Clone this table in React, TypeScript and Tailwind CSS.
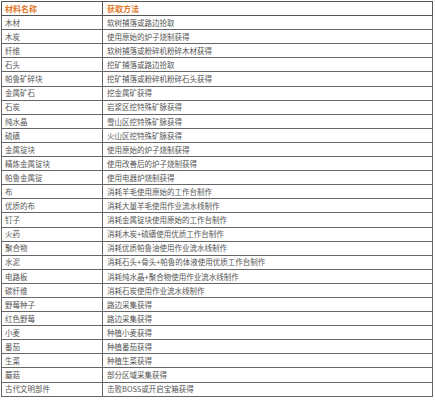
const rows: [string, string][] = [
  ["木材", "软树捕落或路边拾取"],
  ["木炭", "使用原始的炉子烧制获得"],
  ["纤维", "软树捕落或粉碎机粉碎木材获得"],
  ["石头", "挖矿捕落或路边拾取"],
  ["帕鲁矿碎块", "挖矿捕落或粉碎机粉碎石头获得"],
  ["金属矿石", "挖金属矿获得"],
  ["石炭", "岩浆区挖特殊矿脉获得"],
  ["纯水晶", "雪山区挖特殊矿脉获得"],
  ["硫磺", "火山区挖特殊矿脉获得"],
  ["金属锭块", "使用原始的炉子烧制获得"],
  ["精炼金属锭块", "使用改善后的炉子烧制获得"],
  ["帕鲁金属锭", "使用电器炉烧制获得"],
  ["布", "消耗羊毛使用原始的工作台制作"],
  ["优质的布", "消耗大量羊毛使用作业流水线制作"],
  ["钉子", "消耗金属锭块使用原始的工作台制作"],
  ["火药", "消耗木炭+硫磺使用优质工作台制作"],
  ["聚合物", "消耗优质帕鲁油使用作业流水线制作"],
  ["水泥", "消耗石头+骨头+帕鲁的体液使用优质工作台制作"],
  ["电路板", "消耗纯水晶+聚合物使用作业流水线制作"],
  ["碳纤维", "消耗石炭使用作业流水线制作"],
  ["野莓种子", "路边采集获得"],
  ["红色野莓", "路边采集获得"],
  ["小麦", "种植小麦获得"],
  ["番茄", "种植番茄获得"],
  ["生菜", "种植生菜获得"],
  ["蘑菇", "部分区域采集获得"],
  ["古代文明部件", "击败BOSS或开启宝箱获得"],
];

export default function App() {
  return (
    <div className="w-[435px] h-[400px] bg-white pt-[1px] pl-[1px]" style={{ fontFamily: '"Noto Sans CJK SC", "Noto Sans", sans-serif' }}>
      <table className="w-[432px] border-collapse border border-[#555] text-[7.5px] leading-none text-[#555]">
        <colgroup>
          <col className="w-[101px]" />
          <col />
        </colgroup>
        <thead>
          <tr className="h-[14.1px]">
            <th className="border border-[#555] pl-[3px] text-left font-bold text-[8px] text-[#e0782a]">材料名称</th>
            <th className="border border-[#555] pl-[4px] text-left font-bold text-[8px] text-[#e0782a]">获取方法</th>
          </tr>
        </thead>
        <tbody>
          {rows.map(([name, method]) => (
            <tr key={name} className="h-[14.1px]">
              <td className="border border-[#666] pl-[3px] py-0">{name}</td>
              <td className="border border-[#666] pl-[4px] py-0">{method}</td>
            </tr>
          ))}
        </tbody>
      </table>
    </div>
  );
}
